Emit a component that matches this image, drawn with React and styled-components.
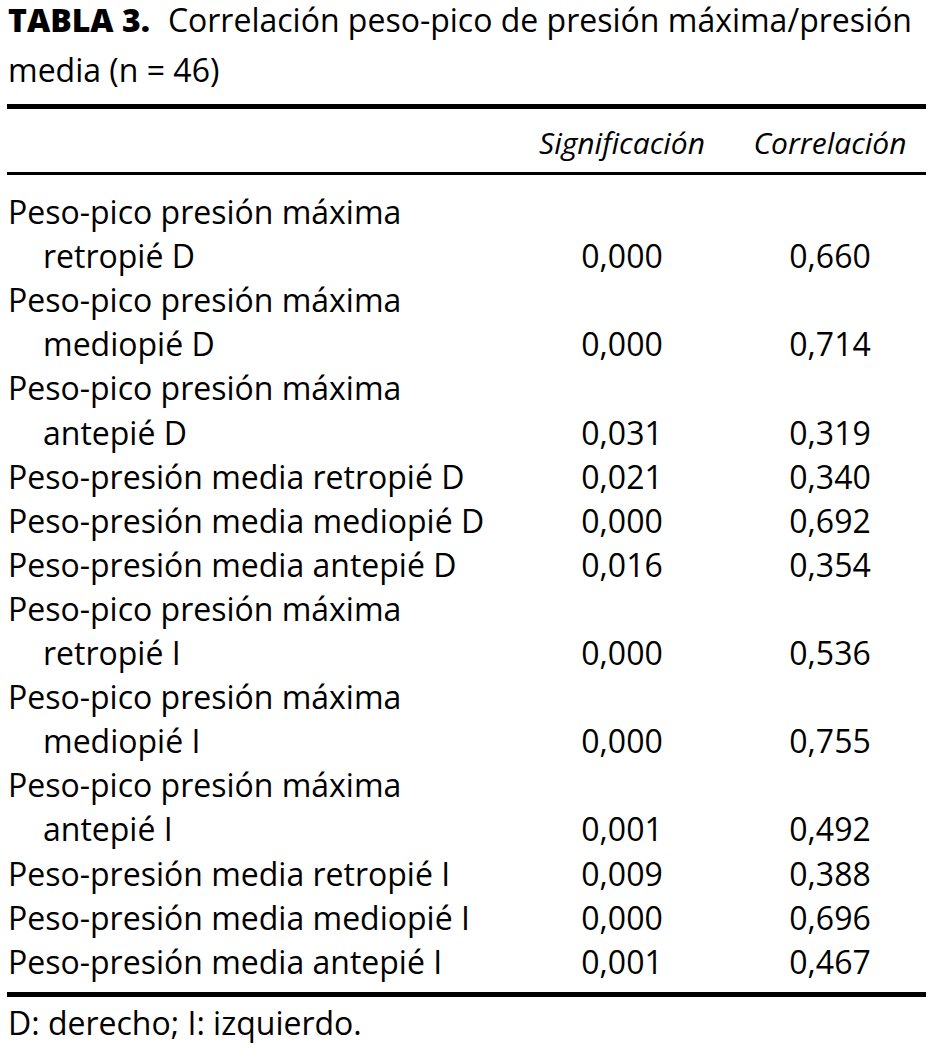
import React from "react";
import styled, { createGlobalStyle } from "styled-components";

const GlobalStyle = createGlobalStyle`
    html, body {
        margin: 0;
        padding: 0;
        background: #ffffff;
    }
    body {
        font-family: "Open Sans", Lato, sans-serif;
        color: #000000;
    }
`;

const Page = styled.div`
    width: 919px;
    padding-left: 7px;
`;

const Caption = styled.div`
    margin-top: -5px;
    padding-left: 1px;
    font-size: 32px;
    line-height: 50px;
    white-space: nowrap;
`;

const CaptionLabel = styled.strong`
    font-weight: 800;
    margin-right: 18px;
`;

const Table = styled.div`
    margin-top: 9px;
    border-top: 5px solid #000;
    border-bottom: 5px solid #000;
`;

const Grid = styled.div`
    display: grid;
    grid-template-columns: 503px 168px 192px;
    column-gap: 28px;
    font-size: 32px;
    line-height: 44.1px;
`;

const Head = styled(Grid)`
    padding: 12px 0 7px;
    border-bottom: 3px solid #000;
    font-size: 30px;
    font-style: italic;
`;

const Body = styled(Grid)`
    padding: 15px 0 8px;
`;

const HeadCell = styled.div`
    text-align: center;
`;

const Label = styled.div`
    white-space: nowrap;
`;

const Line = styled.div`
    padding-left: ${p => (p.$cont ? 36 : 1)}px;
`;

const Value = styled.div`
    align-self: end;
    text-align: center;
`;

const Note = styled.div`
    margin-top: 4px;
    padding-left: 1px;
    font-size: 32px;
    line-height: 44.1px;
`;

const rows = [
    [["Peso-pico presión máxima", "retropié D"], "0,000", "0,660"],
    [["Peso-pico presión máxima", "mediopié D"], "0,000", "0,714"],
    [["Peso-pico presión máxima", "antepié D"], "0,031", "0,319"],
    [["Peso-presión media retropié D"], "0,021", "0,340"],
    [["Peso-presión media mediopié D"], "0,000", "0,692"],
    [["Peso-presión media antepié D"], "0,016", "0,354"],
    [["Peso-pico presión máxima", "retropié I"], "0,000", "0,536"],
    [["Peso-pico presión máxima", "mediopié I"], "0,000", "0,755"],
    [["Peso-pico presión máxima", "antepié I"], "0,001", "0,492"],
    [["Peso-presión media retropié I"], "0,009", "0,388"],
    [["Peso-presión media mediopié I"], "0,000", "0,696"],
    [["Peso-presión media antepié I"], "0,001", "0,467"],
];

const App = () => {
    return (
        <Page>
            <GlobalStyle />
            <Caption>
                <CaptionLabel>TABLA 3.</CaptionLabel>
                Correlación peso-pico de presión máxima/presión
                <br />
                media (n = 46)
            </Caption>
            <Table>
                <Head>
                    <div />
                    <HeadCell>Significación</HeadCell>
                    <HeadCell>Correlación</HeadCell>
                </Head>
                <Body>
                    {rows.map(([lines, sig, corr]) => (
                        <React.Fragment key={lines.join(" ")}>
                            <Label>
                                {lines.map((text, i) => (
                                    <Line key={text} $cont={i > 0}>{text}</Line>
                                ))}
                            </Label>
                            <Value>{sig}</Value>
                            <Value>{corr}</Value>
                        </React.Fragment>
                    ))}
                </Body>
            </Table>
            <Note>D: derecho; I: izquierdo.</Note>
        </Page>
    );
};

export default App;
